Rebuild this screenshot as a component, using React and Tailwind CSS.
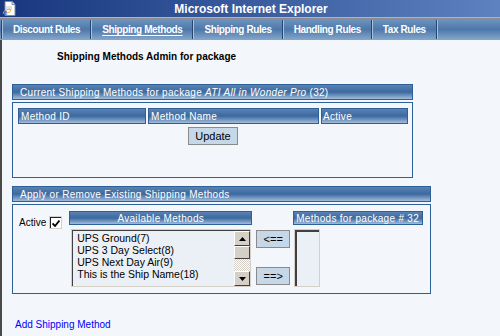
import React from "react";

const font = { fontFamily: '"Liberation Sans", Arial, sans-serif' };

function IeIcon() {
  return (
    <svg width="15" height="15" viewBox="0 0 15 15" className="shrink-0">
      <path d="M3 0.5h7l3 3v11h-10z" fill="#ffffff" stroke="#7a8aa0" />
      <path d="M10 0.5v3h3" fill="#dde4ee" stroke="#7a8aa0" />
      <path d="M4 6h6M4 8h6" stroke="#b8c4d4" />
      <ellipse cx="5" cy="10.5" rx="4.2" ry="1.6" fill="none" stroke="#e8a020" strokeWidth="0.8" transform="rotate(-25 5 10.5)" />
      <text x="1.6" y="13.6" fontSize="8" fontWeight="bold" fill="#1f5fd0" fontFamily="Liberation Serif, serif">e</text>
    </svg>
  );
}

function TabSep() {
  return <div className="w-[2px] h-[19px] border-l border-l-[#26466f] border-r border-r-[#a9c1dc]" />;
}

function Tab({ label, active }) {
  return (
    <div className="px-[10px] text-[10px] font-bold text-white tracking-[-0.4px]">
      <span className={active ? "underline underline-offset-2" : ""}>{label}</span>
    </div>
  );
}

function BarHeader({ children, className = "" }) {
  return (
    <div
      className={
        "border border-[#2d5f99] bg-linear-to-b from-[#5a82b3] via-[#3b699f] to-[#a3bcda] text-white text-[10px] tracking-[0.3px] flex items-center " +
        className
      }
    >
      {children}
    </div>
  );
}

function WinButton({ children, className = "" }) {
  return (
    <button
      type="button"
      className={
        "border border-[#8a8a8a] bg-[#c6d8e8] text-black text-[11px] flex items-center justify-center " +
        className
      }
    >
      {children}
    </button>
  );
}

function ScrollArrow({ up }) {
  return (
    <div className="w-[16px] h-[15px] bg-[#d4d0c8] border border-t-white border-l-white border-r-[#404040] border-b-[#404040] flex items-center justify-center">
      <svg width="7" height="4" viewBox="0 0 7 4">
        <path d={up ? "M3.5 0L7 4H0z" : "M0 0h7L3.5 4z"} fill="#000" />
      </svg>
    </div>
  );
}

export default function App() {
  const methods = ["UPS Ground(7)", "UPS 3 Day Select(8)", "UPS Next Day Air(9)", "This is the Ship Name(18)"];

  return (
    <div className="w-[500px] h-[336px] overflow-hidden flex flex-col bg-[#f3f6fa]" style={font}>
      {/* title bar */}
      <div className="h-[17px] bg-linear-to-r from-[#18367e] to-[#5e82c0] flex items-center relative">
        <div className="pl-[2px]">
          <IeIcon />
        </div>
        <div className="absolute left-0 right-0 text-center text-white font-bold text-[12px] pl-[2px]">
          Microsoft Internet Explorer
        </div>
      </div>
      <div className="h-[2px] bg-linear-to-b from-[#c8c8c8] to-[#7a7a7a]" />

      {/* tabs */}
      <div className="h-[21px] bg-linear-to-b from-[#6f94c0] via-[#4d78aa] to-[#86a7cc] flex items-center pl-[1px]">
        <TabSep />
        <Tab label="Discount Rules" />
        <TabSep />
        <Tab label="Shipping Methods" active />
        <TabSep />
        <Tab label="Shipping Rules" />
        <TabSep />
        <Tab label="Handling Rules" />
        <TabSep />
        <Tab label="Tax Rules" />
        <TabSep />
      </div>

      {/* body */}
      <div className="flex-1 border-l-2 border-l-[#4a4a4a] flex flex-col">
        <div className="pl-[55px] pt-[9px] text-[10px] font-bold text-black">Shipping Methods Admin for package</div>

        {/* panel 1 */}
        <div className="ml-[10px] mt-[20px] w-[401px]">
          <BarHeader className="h-[16px] pl-[7px]">
            Current Shipping Methods for package&nbsp;<i>ATI All in Wonder Pro</i>&nbsp;(32)
          </BarHeader>
          <div className="mt-[2px] border border-[#2d5f99] h-[76px] pl-[5px] pt-[5px]">
            <div className="flex gap-[2px]">
              <BarHeader className="w-[128px] h-[16px] pl-[2px]">Method ID</BarHeader>
              <BarHeader className="w-[171px] h-[16px] pl-[2px]">Method Name</BarHeader>
              <BarHeader className="w-[87px] h-[16px] pl-[1px]">Active</BarHeader>
            </div>
            <div className="mt-[3px] flex pl-[170px]">
              <WinButton className="w-[50px] h-[18px]">Update</WinButton>
            </div>
          </div>
        </div>

        {/* panel 2 */}
        <div className="ml-[10px] mt-[8px] w-[419px]">
          <BarHeader className="h-[16px] pl-[7px]">Apply or Remove Existing Shipping Methods</BarHeader>
          <div className="mt-[2px] border border-[#2d5f99] h-[90px] pl-[6px] pt-[6px] flex">
            <div className="flex items-center mt-[5px] h-[13px] text-[10px] text-black">
              <span>Active</span>
              <div className="ml-[3px] w-[13px] h-[13px] bg-[#d4d0c8] p-[1px]">
                <div className="w-full h-full bg-white border-l border-t border-[#202020] flex items-center justify-center">
                  <svg width="8" height="7" viewBox="0 0 8 7">
                    <path d="M0.5 3.5L3 6L7.5 0.5" fill="none" stroke="#000" strokeWidth="1.8" />
                  </svg>
                </div>
              </div>
            </div>

            <div className="ml-[7px] flex flex-col">
              <BarHeader className="w-[183px] h-[14px] justify-center">Available Methods</BarHeader>
              <div className="mt-[4px] ml-[2px] w-[180px] h-[58px] border border-[#d4d0c8] bg-[#d4d0c8] flex">
                <div className="flex-1 flex border-l border-t border-[#404040] bg-[#eaf0f6]">
                  <div className="flex-1 pl-[4px] pt-[1px] text-[10.5px] leading-[12px] text-black whitespace-nowrap overflow-hidden">
                    {methods.map((m) => (
                      <div key={m}>{m}</div>
                    ))}
                  </div>
                  <div className="w-[16px] flex flex-col">
                    <ScrollArrow up />
                    <div className="h-[13px] bg-[#d4d0c8] border border-t-white border-l-white border-r-[#404040] border-b-[#404040]" />
                    <div
                      className="flex-1"
                      style={{
                        backgroundImage:
                          "repeating-conic-gradient(#d4d0c8 0% 25%, #ffffff 0% 50%)",
                        backgroundSize: "2px 2px",
                      }}
                    />
                    <ScrollArrow />
                  </div>
                </div>
              </div>
            </div>

            <div className="ml-[4px] flex flex-col pt-[19px]">
              <WinButton className="w-[34px] h-[18px]">&lt;==</WinButton>
              <WinButton className="w-[34px] h-[18px] mt-[19px]">==&gt;</WinButton>
            </div>

            <div className="ml-[3px] flex flex-col">
              <BarHeader className="w-[130px] h-[14px] pl-[2px]">Methods for package # 32</BarHeader>
              <div className="mt-[4px] ml-[1px] w-[26px] h-[58px] border border-[#d4d0c8] bg-[#d4d0c8] flex">
                <div className="flex-1 border-l-2 border-t-2 border-[#404040] bg-[#eaf0f6]" />
              </div>
            </div>
          </div>
        </div>

        <div className="pl-[13px] mt-[23px] text-[10px] text-[#0000ff]">Add Shipping Method</div>
      </div>
    </div>
  );
}
